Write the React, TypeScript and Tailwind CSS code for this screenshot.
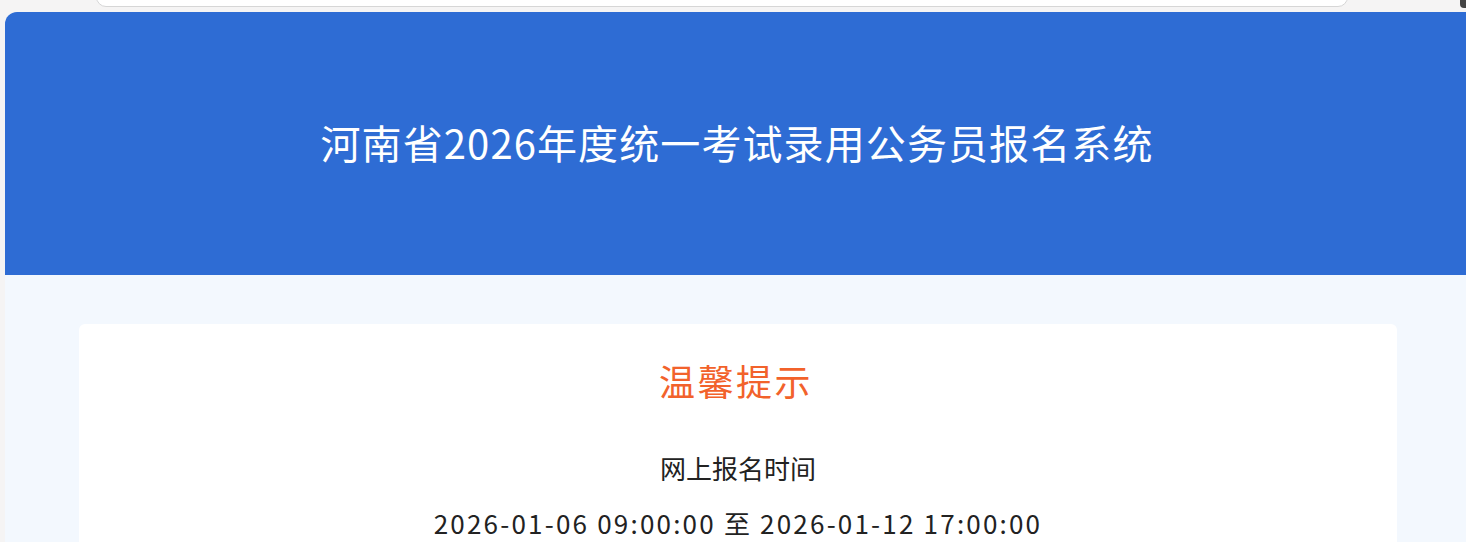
import React from "react";

export default function App() {
  const font = { fontFamily: '"Noto Sans CJK SC", "Noto Sans", sans-serif' };
  return (
    <div className="w-[1466px] h-[542px] overflow-hidden bg-[#f5f4f4] flex flex-col" style={font}>
      <div className="h-[12px] relative shrink-0">
        <div className="absolute left-[96px] top-[-10px] w-[1252px] h-[17px] bg-white border border-[#d6d6d6] rounded-b-[10px]" />
        <div className="absolute right-0 top-0 w-[6px] h-[8px] bg-[#444] rounded-bl-[4px]" />
      </div>
      <div className="flex-1 ml-[5px] rounded-tl-[12px] overflow-hidden bg-[#f3f8fe] flex flex-col">
        <div className="h-[263px] shrink-0 bg-[#2e6cd4] flex items-center justify-center">
          <h1 className="text-white text-[40px] leading-none tracking-[1.1px] pb-[4px] pl-[3px]">
            河南省2026年度统一考试录用公务员报名系统
          </h1>
        </div>
        <div className="mt-[49px] ml-[74px] mr-[69px] bg-white rounded-t-[6px] flex-1 flex flex-col items-center pt-[38px]">
          <div className="text-[#f2622b] text-[36px] leading-none tracking-[2.5px] pr-[4px]">温馨提示</div>
          <div className="mt-[57px] text-[#222] text-[26px] leading-none">网上报名时间</div>
          <div className="mt-[29px] text-[#222] text-[26px] leading-none tracking-[2.2px]">
            2026-01-06 09:00:00 至 2026-01-12 17:00:00
          </div>
        </div>
      </div>
    </div>
  );
}
